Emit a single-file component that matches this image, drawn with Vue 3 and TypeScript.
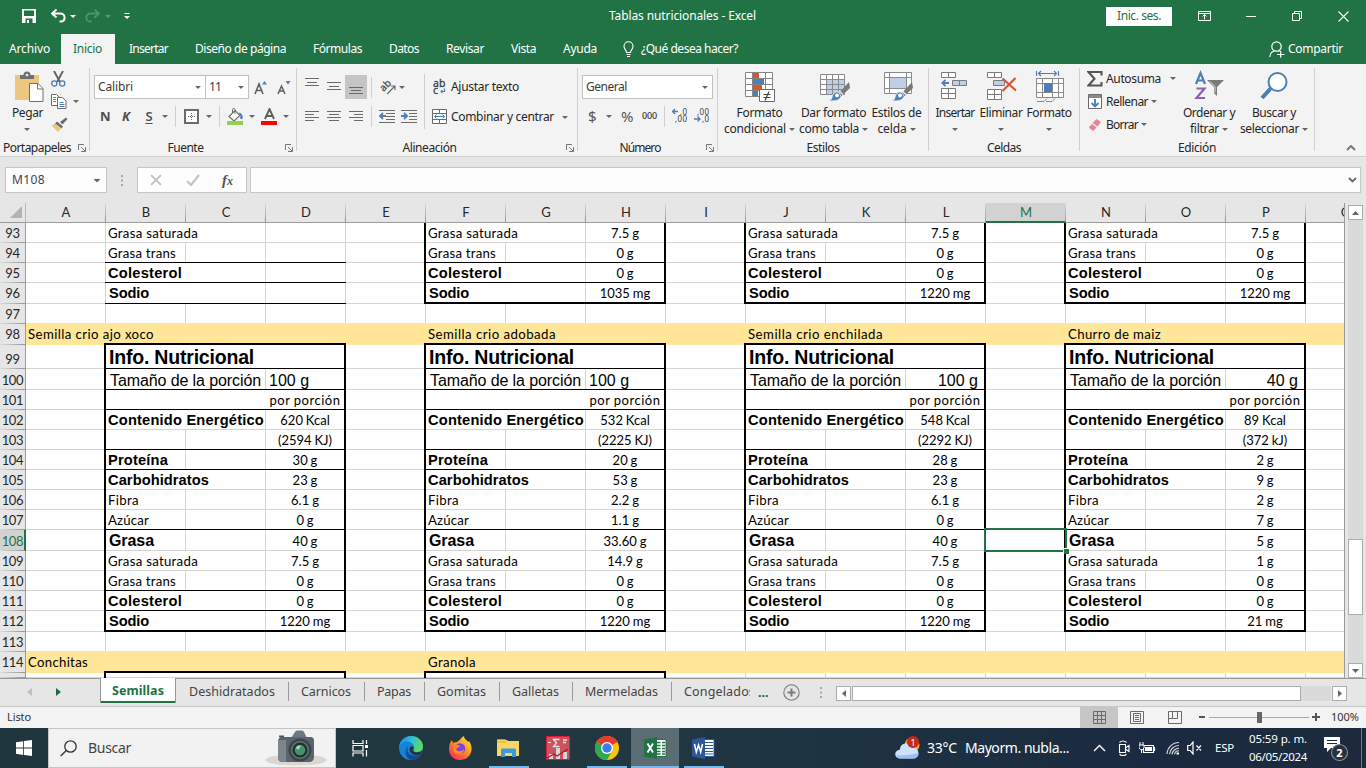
<script setup lang="ts">
import { h } from 'vue'

type Icon = [number, number, string]

const g = '#6b6b6b'
const b = '#4a7fb8'
const hl = (x: number, y: number, w: number, c = g) => `<rect x="${x}" y="${y}" width="${w}" height="1" fill="${c}"/>`
const rows = (list: number[][]) => list.map(([x, y, w]) => hl(x, y, w)).join('')

const brush = `<path d="M29 16 17.500 28.500l3 2.500L30 22z" fill="#7a7a7a"/><path d="M19 25l4 3.500" stroke="#f3f3f3" stroke-width="1.200"/><path d="M19 26.500c-4-1.500-6 .5-7.500 6.500-.8 1.500-3 1.500-4 1.500 5 1 12.500.5 13.500-4z" fill="${b}" stroke="#f3f3f3" stroke-width=".8"/><circle cx="17" cy="29.500" r="2" fill="#fff"/>`

const icons: Record<string, Icon> = {
  arrow: [6, 3, `<path d="M0 0h6L3 3z" fill="#666"/>`],
  arrowW: [6, 3, `<path d="M0 0h6L3 3z" fill="#fff"/>`],
  arrowP: [6, 3, `<path d="M0 0h6L3 3z" fill="#5c9a79"/>`],
  save: [14, 14, `<path d="M0 0h14v14H0z" fill="#fff"/><path d="M2 1.500h10V7H2zM3.500 9.500h7V14h-7z" fill="#217346"/><rect x="5" y="11" width="2" height="3" fill="#fff"/>`],
  undo: [15, 14, `<path d="M5.500.5 1 4.500 5.500 8.500M1.500 4.500H9c6 0 6 8 1 8H8.500" fill="none" stroke="#fff" stroke-width="2"/>`],
  redo: [15, 14, `<path d="M9.500.5 14 4.500 9.500 8.500M13.500 4.500H6c-6 0-6 8-1 8h1.500" fill="none" stroke="#4f9170" stroke-width="1.800"/>`],
  custom: [6, 6, `<path d="M.5 0h5v1h-5zM0 3h6L3 6z" fill="#fff"/>`],
  ribbonOpt: [13, 10, `<path d="M.5.5h12v9H.5zM.5 2.500h12M6.500 8.500v-5M4.500 5.500l2-2 2 2" fill="none" stroke="#fff"/>`],
  min: [10, 10, hl(0, 5, 10, '#fff')],
  restore: [10, 10, `<path d="M.5 2.500h7v7h-7zM2.500 2.500v-2h7v7h-2" fill="none" stroke="#fff"/>`],
  close: [11, 11, `<path d="M.5.5l10 10M10.500.5l-10 10" fill="none" stroke="#fff" stroke-width="1.100"/>`],
  bulb: [11, 16, `<path d="M3.500 11.500C3.500 9 1 8.500 1 5.300a4.500 4.500 0 0 1 9 0C10 8.500 7.500 9 7.500 11.500zM3.500 13.500h4M4 15.500h3" fill="none" stroke="#fff" stroke-width="1.100"/>`],
  share: [16, 17, `<circle cx="7.500" cy="5.500" r="4.700" fill="none" stroke="#fff" stroke-width="1.200"/><path d="M.7 16C1 12.500 3 10.500 5.500 10M9.500 9.800l1 .7M8 13.500h7.500M11.700 9.800v7" fill="none" stroke="#fff" stroke-width="1.200"/>`],
  paste: [30, 33, `<path d="M1 5h24v25H1z" fill="#edc77e"/><path d="M6 9V5h3.500a3.500 3.500 0 0 1 7 0H20v4z" fill="#6f6f6f"/><circle cx="13" cy="5" r="1.300" fill="#f3f3f3"/><path d="M15.500 13.500H24l5 5v13H15.500z" fill="#fff" stroke="#6f6f6f"/><path d="M23.500 13.500v5.500H29" fill="none" stroke="#6f6f6f"/>`],
  cut: [15, 16, `<path d="M3 0l6 11M12 0L6 11" stroke="#636363" stroke-width="1.900"/><circle cx="3.300" cy="12.500" r="2.600" fill="none" stroke="${b}" stroke-width="1.300"/><circle cx="11.200" cy="12.500" r="2.600" fill="none" stroke="${b}" stroke-width="1.300"/>`],
  copy: [16, 15, `<path d="M.5.5h5l3 3v8h-8z" fill="#fff" stroke="${g}"/><path d="M6.500 3.500h5l3.500 3.500v7.500H6.500z" fill="#fff" stroke="${g}"/><path d="M2 3.500h3M2 5.500h3M2 7.500h3M8.500 8.500h4M8.500 10.500h5M8.500 12.500h5" stroke="${b}"/>`],
  painter: [17, 15, `<path d="M15 .5l1.500 1.500-5 5.500L9 5z" fill="#6b6b6b"/><path d="M6 4.500l6 5-1.500 2-6.500-5z" fill="#6b6b6b"/><path d="M4 6.500l6 5-3 3.500L.5 8.500z" fill="#edc77e"/>`],
  launch: [8, 8, `<path d="M.5 6V.5H6M3 3l4 4M7.500 3v4.500H3" fill="none" stroke="#777"/>`],
  growA: [14, 15, `<path d="M8 4.500L10.500 1 13 4.500z" fill="${b}"/><path d="M1 14L5 4l4 10M2.500 10.500h5" fill="none" stroke="#5f5f5f" stroke-width="1.600"/>`],
  shrinkA: [14, 15, `<path d="M8.500 1L11 4.500 13.500 1z" fill="${b}"/><path d="M1 14l3.500-8L8 14M2.500 11h4" fill="none" stroke="#5f5f5f" stroke-width="1.500"/>`],
  borders: [15, 15, `<path d="M1 1h13v13H1z" fill="#fff" stroke="#6b6b6b" stroke-width="2"/><path d="M4 7.500h8M7.500 4v8" stroke="#6b6b6b" stroke-dasharray="1 1"/>`],
  bucket: [17, 17, `<path d="M2 8.500L8 2.500l5 5-6 5.500z" fill="#fff" stroke="#6b6b6b" stroke-width="1.100"/><path d="M5.500 5V1.500c0-1.500 2.500-1.500 2.500 0V6" fill="none" stroke="#6b6b6b"/><path d="M11.500 4.500c3 0 5 3 4 6.500-2 1-3-1-2-3.500z" fill="${b}"/><rect y="13" width="16" height="4" fill="#92d050"/>`],
  fontA: [17, 17, `<path d="M4 11L8.500 1l4.500 10M5.500 8h6" fill="none" stroke="#5f5f5f" stroke-width="1.900"/><rect y="13" width="16" height="4" fill="#f00"/>`],
  vTop: [15, 24, rows([[0, 3, 14], [2, 7, 10], [0, 10, 14]])],
  vMid: [15, 24, rows([[0, 7, 14], [2, 11, 10], [0, 14, 14]])],
  vBot: [15, 24, rows([[0, 12, 14], [2, 15, 10], [0, 18, 14]])],
  alL: [15, 12, rows([[0, 1, 14], [0, 4, 9], [0, 7, 14], [0, 10, 9]])],
  alC: [15, 12, rows([[0, 1, 14], [2, 4, 10], [0, 7, 14], [2, 10, 10]])],
  alR: [15, 12, rows([[0, 1, 14], [5, 4, 9], [0, 7, 14], [5, 10, 9]])],
  orient: [17, 18, `<text transform="translate(4.500 14) rotate(-45)" font-family="Noto Sans" font-size="10" fill="#505050" stroke="#505050" stroke-width=".3">ab</text><path d="M8 16L15.500 8.500M12 8h4v4" fill="none" stroke="#6b6b6b" stroke-width="1.200"/>`],
  outdent: [17, 13, rows([[0, 0, 16], [7, 3, 9], [7, 6, 9], [7, 9, 9], [0, 12, 16]]) + `<path d="M1 6h6M4 3L1 6l3 3" fill="none" stroke="${b}" stroke-width="1.800"/>`],
  indent: [17, 13, rows([[0, 0, 16], [8, 3, 8], [8, 6, 8], [8, 9, 8], [0, 12, 16]]) + `<path d="M0 6h6M3 3l3 3-3 3" fill="none" stroke="${b}" stroke-width="1.800"/>`],
  wrap: [14, 18, `<text x="0" y="9" font-family="Noto Sans" font-size="10.500" fill="#404040" stroke="#404040" stroke-width=".3">ab</text><text x="0" y="16" font-family="Noto Sans" font-size="10.500" fill="#404040" stroke="#404040" stroke-width=".3">c</text><path d="M11.500 10.500v3H8M9.500 11.800L8 13.500l1.500 1.700" fill="none" stroke="${b}" stroke-width="1.100"/>`],
  merge: [16, 16, `<path d="M.5.5h14v14H.5zM.5 4.500h14M.5 10.500h14M7.500.5v4M7.500 10.500v4" fill="#fff" stroke="${g}"/><path d="M2.500 7.500h10M4.500 5.500l-2 2 2 2M10.500 5.500l2 2-2 2" fill="none" stroke="${b}"/>`],
  decUp: [16, 16, `<path d="M0 3.500h6M3 1L.5 3.500 3 6" fill="none" stroke="${b}" stroke-width="1.300"/><text x="8" y="7" font-family="Noto Sans" font-size="8" textLength="7" fill="#404040">,0</text><text x="3" y="14" font-family="Noto Sans" font-size="8" textLength="12" fill="#404040">,00</text>`],
  decDn: [16, 16, `<path d="M0 11h6M3.500 8.500L6 11l-2.500 2.500" fill="none" stroke="${b}" stroke-width="1.300"/><text x="3" y="7" font-family="Noto Sans" font-size="8" textLength="12" fill="#404040">,00</text><text x="8" y="14" font-family="Noto Sans" font-size="8" textLength="7" fill="#404040">,0</text>`],
  cond: [30, 33, `<path d="M.5 2.500h27v24H.5z" fill="#fff"/><path d="M8 3h6v5H8zM8 14h9v6H8z" fill="#d65532"/><path d="M8 8h11v6H8zM8 20h5v6H8z" fill="${b}"/><path d="M.5 2.500h27v24H.5zM7.500 2.500v24M.5 8.500h27M.5 14.500h27M.5 20.500h27M20.500 2.500v24" fill="none" stroke="#858585"/><path d="M14.500 19.500h15v12h-15z" fill="#fff" stroke="#6b6b6b"/><path d="M18.500 24.500h7M18.500 27.500h7M24 21.500l-4 9" stroke="#444" stroke-width="1.200"/>`],
  tableFmt: [30, 33, `<path d="M.5 4.500h24v20H.5z" fill="#fff"/><path d="M7 9h18v16H7z" fill="#bfd0e6"/><path d="M.5 4.500h24v20H.5zM6.500 4.500v20M12.500 4.500v20M18.500 4.500v20M.5 9.500h24M.5 14.500h24M.5 19.500h24" fill="none" stroke="#8a8a8a"/><g transform="translate(0,-4)">${brush}</g>`],
  cellSty: [30, 33, `<path d="M1.500 2.500h27v21h-27z" fill="#fff"/><path d="M7 8h16v10H7z" fill="#bfd0e6"/><path d="M1.500 2.500h27v21h-27zM6.500 2.500v21M23.500 2.500v21M1.500 7.500h27M1.500 18.500h27" fill="none" stroke="#8a8a8a"/><g transform="translate(0,-4)">${brush}</g>`],
  insert: [28, 33, `<path d="M.5 2.500h14v5H.5zM7.500 2.500v5M.5 18.500h14v10H.5zM7.500 18.500v10M.5 23.500h14" fill="#fff" stroke="#7a7a7a"/><path d="M11.500 10.500h14v5h-14zM18.500 10.500v5" fill="#bfd0e6" stroke="#7a7a7a"/><path d="M1 13h7M4.500 9.800L1.300 13l3.200 3.200" fill="none" stroke="${b}" stroke-width="1.800"/>`],
  remove: [30, 33, `<path d="M.5 2.500h14v5H.5zM7.500 2.500v5M.5 19.500h14v10H.5zM7.500 19.500v10M.5 24.500h14" fill="#fff" stroke="#7a7a7a"/><path d="M6.500 10.500h11v5h-11z" fill="#bfd0e6" stroke="#7a7a7a"/><path d="M15.500 8.500l13.500 12M28.500 8L15.500 21" fill="none" stroke="#d65532" stroke-width="2.200"/>`],
  format: [30, 33, `<path d="M1.500 8.500h27v19h-27z" fill="#fff"/><path d="M1.500 8v19.500h27V8M1.500 8.500h27M7.500 8v19M17.500 8v19M23.500 8v19M1.500 13.500h27M1.500 22.500h27" fill="none" stroke="#8a8a8a"/><path d="M9 13h8v9H9z" fill="${b}"/><path d="M2 31.500h7l3-3M11 31.500h6l3-3" fill="none" stroke="#8a8a8a"/><path d="M1.500 1v5M23.500 1v5M4 3.500h17M6 1L3.500 3.500 6 6M19 1l2.500 2.500L19 6" fill="none" stroke="${b}" stroke-width="1.200"/>`],
  sum: [16, 16, `<path d="M14.500 4.500V1H1.500l6 6.800L1.500 14.500h13V11" fill="none" stroke="#555" stroke-width="2.100"/>`],
  fill: [15, 16, `<path d="M.5.5h13v14H.5z" fill="#fff" stroke="#6b6b6b"/><path d="M1 1h12v3H1z" fill="#8a8a8a"/><path d="M7 5v7M3.500 9L7 12.500 10.500 9" fill="none" stroke="${b}" stroke-width="1.900"/>`],
  eraser: [14, 14, `<path d="M8.500 1l4.500 3-3.500 4.500-5-3.500z" fill="#e7859a"/><path d="M4 6l4.500 3.300L6.500 12c-1 1-2 .6-2.800 0L1.800 10.500c-1-1-.6-1.600 0-2.200z" fill="#e7859a"/>`],
  sort: [31, 33, `<path d="M2 14L6.500 3 11 14M3.500 10.500h6" fill="none" stroke="${b}" stroke-width="2.200"/><path d="M2.500 18.500h8L2.500 28h8.500" fill="none" stroke="#9460b5" stroke-width="2.200"/><path d="M13 10h17l-7 7v9l-3-3v-6z" fill="#7a7a7a"/><path d="M16 11.500l5 5v6" stroke="#d8d8d8" fill="none"/>`],
  find: [28, 33, `<circle cx="17.500" cy="12" r="9" fill="#fff" stroke="${b}" stroke-width="2"/><path d="M11 18L2 28" stroke="${b}" stroke-width="4"/>`],
  collapse: [10, 6, `<path d="M1 5l4-4 4 4" fill="none" stroke="#777" stroke-width="1.900"/>`],
  cancel: [12, 12, `<path d="M1 1l10 10M11 1L1 11" stroke="#c4c4c4" stroke-width="1.800"/>`],
  check: [14, 12, `<path d="M1 7l4 4L13 1" fill="none" stroke="#c4c4c4" stroke-width="2.200"/>`],
  down: [9, 6, `<path d="M1 1l3.500 3.500L8 1" fill="none" stroke="#6b6b6b" stroke-width="1.900"/>`],
  dots3: [2, 11, `<path d="M0 0h2v2H0zM0 4.500h2v2H0zM0 9h2v2H0z" fill="#a8a8a8"/>`],
  corner: [12, 12, `<path d="M12 0v12H0z" fill="#b2b2b2"/>`],
  tabPrev: [5, 8, `<path d="M5 0v8L0 4z" fill="#c0c0c0"/>`],
  tabNext: [5, 8, `<path d="M0 0v8l5-4z" fill="#1e6b41"/>`],
  plus: [17, 17, `<circle cx="8.500" cy="8.500" r="7.700" fill="none" stroke="#7a7a7a" stroke-width="1.100"/><path d="M8.500 4.500v8M4.500 8.500h8" stroke="#7a7a7a" stroke-width="2"/>`],
  sLeft: [4, 7, `<path d="M4 0v7L0 3.500z" fill="#666"/>`],
  sRight: [4, 7, `<path d="M0 0v7l4-3.500z" fill="#666"/>`],
  sUp: [7, 4, `<path d="M0 4h7L3.500 0z" fill="#666"/>`],
  sDown: [7, 4, `<path d="M0 0h7L3.500 4z" fill="#666"/>`],
  vGrid: [13, 13, `<path d="M.5.5h12v12H.5zM4.500.5v12M8.500.5v12M.5 4.500h12M.5 8.500h12" fill="none" stroke="#6b6b6b"/>`],
  vPage: [14, 13, `<path d="M.5.5h13v12H.5zM3.500 2.500h7v8h-7zM5 4.500h4M5 6.500h4M5 8.500h4" fill="none" stroke="#6b6b6b"/>`],
  vBreak: [14, 13, `<path d="M.5.5h13v12H.5zM4.500.5v7h5v-7M.5 7.500h4" fill="none" stroke="#6b6b6b"/>`],
  win: [16, 16, `<path d="M0 2.300L7.200 1.200V7.600H0zM8 1.100L16 0v7.600H8zM0 8.400h7.200v6.500L0 13.800zM8 8.400h8V16L8 14.900z" fill="#fff"/>`],
  mag: [17, 17, `<circle cx="10.500" cy="6.500" r="5.700" fill="none" stroke="#333" stroke-width="1.300"/><path d="M6.300 10.500L.7 16" stroke="#333" stroke-width="1.400"/>`],
  camera: [62, 38, `<ellipse cx="31" cy="31" rx="31" ry="5.500" fill="#dcd5d0"/><path d="M26 9l4-6c.8-1.200 1.500-1.500 3-1.500h3c1.500 0 2.200.3 3 1.500l3 6z" fill="#6d7880"/><path d="M15 8h30c3 0 4 1 4 4v16c0 3-2 5-5 5H18c-3 0-5-2-5-5V11z" fill="#59646c"/><path d="M13 11h8v22h-4c-3 0-4-2-4-5z" fill="#7b868e"/><circle cx="35" cy="21" r="11.500" fill="#3c464d"/><circle cx="35" cy="21" r="9" fill="#66727a"/><circle cx="35" cy="21" r="7.500" fill="#22302d"/><circle cx="35" cy="21" r="5.300" fill="#3f9468"/><path d="M31 19c1-2 3-3 5-2l-3 4z" fill="#a5dcbd"/><path d="M14 6.500h5V8h-5z" fill="#4b555d"/>`],
  taskview: [17, 17, `<path d="M1 0v3.500h10V0M1 16.500V13h10v3.500M1 5.500h10v5.500H1zM14.500 0v4M14.500 10v6.500" fill="none" stroke="#fff" stroke-width="1.200"/><path d="M13 5h3v3h-3z" fill="#fff"/>`],
  edge: [24, 24, `<defs><linearGradient id="eg" x1="0" y1=".3" x2="1" y2=".6"><stop offset="0" stop-color="#1a8fdc"/><stop offset=".5" stop-color="#35c1cf"/><stop offset="1" stop-color="#63dd4c"/></linearGradient></defs><circle cx="12" cy="12" r="12" fill="#1583da"/><path d="M8.500 14.500c1 4.500 7 7 14 3.500-2 4-6 6-10.500 6C6.500 22 5 16 8.500 10z" fill="#0d4f96"/><path d="M0 12C.5 5 5.500 0 12 0c7 0 12 5 12 10.500 0 3.500-3 5.500-6 5.500-2.500 0-4-.8-4-1.800 0-.5 1-1.200 1-3.200 0-3-3-5.500-7-5.500C4 5.500 1 8 0 12z" fill="url(#eg)"/><path d="M14.300 14.700c.7 1.100 2 1.500 4 1.500 2.200 0 4.300-.7 5.300-2.200-.2 1.500-.8 3-1.800 4.300-3 1.700-7.300 1.200-9.600-1-1.700-1.600-2.300-4.600-1-6.300 1.500-1.500 3.800-.5 3.600 1.200-.1 1-.8 1.700-.5 2.500z" fill="#213842"/>`],
  firefox: [24, 24, `<defs><linearGradient id="ff" x1="1" y1="0" x2=".2" y2="1"><stop offset="0" stop-color="#fff04a"/><stop offset=".45" stop-color="#ff9a24"/><stop offset="1" stop-color="#fb2a5d"/></linearGradient></defs><path d="M12 24C5 24 1 19 1 13c0-4 1-7 3-9l1 3c1-1 3-1 4-1 1-1 2-1.500 3-2 0-1 2-3 4-4 0 3 3 4 4 6l1-1c2 3 3 6 2.500 9C23 20 18 24 12 24z" fill="url(#ff)"/><circle cx="12" cy="12.500" r="5.300" fill="#7b43d8"/><path d="M5 9c3-1 5 0 7 1-1 2-4 2-4 3 1 3 6 3 8 0 0 5-6 7-10 3-1-2-2-5-1-7z" fill="#ff8a1f"/>`],
  folder: [23, 20, `<path d="M0 1h8l2 2H0z" fill="#d18f16"/><path d="M0 2h10l1 1h11v15H0z" fill="#fcd462"/><path d="M0 4h9" stroke="#e5ab32"/><path d="M4 19v-7c0-1 .7-1.500 1.500-1.500h12c1 0 1.500.5 1.500 1.500v7h-4v-4h-7v4z" fill="#3b99dc"/>`],
  stat: [24, 24, `<path d="M.5.5h23v23H.5z" fill="#c9545f" stroke="#e0183c"/><path d="M3 18h4v5H3zM10 12h4v11h-4zM17 16h4v7h-4z" fill="#d9d4d6"/><path d="M13.500 3.500H7.500l3 3.500-3 3.500h6M17 4h4M17 6.500h3" fill="none" stroke="#f1dfe1" stroke-width="1.300"/><path d="M2 6.500h3" stroke="#f1dfe1"/><path d="M1 22l7-4 3 2 11-7" fill="none" stroke="#b4142e" stroke-width="1.200"/>`],
  chrome: [24, 24, `<circle cx="12" cy="12" r="12" fill="#f9c513"/><path d="M12 12L1.600 6A12 12 0 0 1 22.400 6z" fill="#e33b2e"/><path d="M12 12L1.600 6A12 12 0 0 0 12 24l5-9z" fill="#2da94f"/><path d="M12 6.500h10.700l-.3-.5H12z" fill="#e33b2e"/><circle cx="12" cy="12" r="6" fill="#fff"/><circle cx="12" cy="12" r="4.700" fill="#3b7ded"/>`],
  excel: [23, 22, `<path d="M11 2.500h11v17H11z" fill="#fff" stroke="#217346"/><path d="M13 5.500h3.500M18 5.500h3M13 8.500h3.500M18 8.500h3M13 11.500h3.500M18 11.500h3M13 14.500h3.500M18 14.500h3M13 17h3.500M18 17h3" stroke="#217346" stroke-width="1.400"/><path d="M0 2.500L13 0v22L0 19.500z" fill="#217346"/><path d="M3.500 6.500l5.500 9M9 6.500l-5.500 9" stroke="#fff" stroke-width="1.900"/>`],
  word: [23, 22, `<path d="M11 2.500h11v17H11z" fill="#fff" stroke="#2b579a"/><path d="M13 5.500h8M13 8.500h8M13 11.500h8M13 14.500h8M13 17h8" stroke="#2b579a" stroke-width="1.100"/><path d="M0 2.500L13 0v22L0 19.500z" fill="#2b579a"/><path d="M2.500 7l1.800 8L6.500 8l2.200 7 1.800-8" fill="none" stroke="#fff" stroke-width="1.500"/>`],
  weather: [25, 24, `<circle cx="17" cy="9" r="7.500" fill="#f0a422"/><path d="M6 22.500c-7.500 0-7.500-8-1-9 0-7.500 10-8 12-2 7-1 9 9 2 11z" fill="#cfe2fb"/><path d="M1.500 18c2 3 12 1 22-1 .5 3-2 5.500-4.500 5.500H6c-3 0-4.500-2-4.500-4.500z" fill="#9cc0f5"/><circle cx="18" cy="6" r="6" fill="#c42b1c"/><text x="18" y="9.500" font-family="Noto Sans" font-size="9" text-anchor="middle" fill="#fff">1</text>`],
  chev: [13, 8, `<path d="M1 7l5.500-5.500L12 7" fill="none" stroke="#fff" stroke-width="1.400"/>`],
  meet: [12, 16, `<path d="M1.500 4.500h6v8h-6zM8 7.500l3-2v6l-3-2M1.500 2.500c2-2 5-2 7 0M1.500 14.200c2 1.500 5 1.500 7 0" fill="none" stroke="#fff" stroke-width="1.100"/>`],
  battery: [17, 12, `<path d="M4.500 3.500h10v7h-10zM15.500 5v4" fill="none" stroke="#fff" stroke-width="1.200"/><path d="M6 5h7v4H6z" fill="#fff"/><path d="M0 3h5v3L3.500 7.500h-2L0 6zM1 0v3M4 0v3M2.500 7v4" stroke="#fff" fill="#1c2d40"/>`],
  wifi: [14, 14, `<path d="M1 13A12 12 0 0 1 13 1.500M3.500 13.200A9.500 9.500 0 0 1 13 4.500M6 13.300a7 7 0 0 1 7-6M8.500 13.400a4.500 4.500 0 0 1 4.500-3.700" fill="none" stroke="#d9dee3" stroke-width="1.100"/><path d="M10.500 11.500h2.500v2h-2.500z" fill="#fff"/>`],
  mute: [15, 14, `<path d="M.7 4.500h2.500L6 1v12L3.200 9.500H.7zM9.500 4.500l4.500 5M14 4.500l-4.500 5" fill="none" stroke="#fff" stroke-width="1.200"/>`],
  notif: [26, 26, `<path d="M1 2h16v11H8l-4 4v-4H1z" fill="#fff"/><path d="M4 5.500h10M4 8.500h10" stroke="#1b2a3e" stroke-width="1.200"/><circle cx="16.500" cy="17.500" r="8" fill="#2b2f36" stroke="#858c94" stroke-width="1.200"/><text x="16.500" y="21.500" font-family="Noto Sans" font-size="11" font-weight="bold" text-anchor="middle" fill="#fff">2</text>`],
}

const Ic = (p: { n: string }) => {
  const [w, ht, body] = icons[p.n]
  return h('svg', { width: w, height: ht, viewBox: `0 0 ${w} ${ht}`, innerHTML: body, class: 'ic' })
}
Ic.props = ['n']

/* Tracks a label's letters so that it spans exactly the given width. */
const vFit = {
  mounted(el: HTMLElement, { value }: { value: number }) {
    const r = document.createRange()
    r.selectNodeContents(el)
    const n = (el.textContent ?? '').length
    el.style.letterSpacing = `${(value - r.getBoundingClientRect().width) / n}px`
    el.style.width = `${value}px`
  },
}

const tabs: [string, number][] = [
  ['Archivo', 41], ['Inicio', 29], ['Insertar', 39], ['Diseño de página', 91], ['Fórmulas', 49],
  ['Datos', 30], ['Revisar', 38], ['Vista', 25], ['Ayuda', 34],
]
const sheets: [string, number][] = [
  ['Deshidratados', 86], ['Carnicos', 50], ['Papas', 34], ['Gomitas', 49], ['Galletas', 47], ['Mermeladas', 73],
]

const cols = 'ABCDEFGHIJKLMNOPQ'.split('')
const heights = [20, 20, 20, 21, 20, 21, 24, 21, 20, 20, 20, 20, 20, 20, 20, 21, 20, 20, 20, 21, 20, 21, 5]
const sheetRows = heights.map((_, i) => 93 + i)
const gridRows = heights.map((v) => `${v}px`).join(' ')
const banded = (r: number) => r === 98 || r === 114
const raised = (r: number) => [96, 98, 112, 114].includes(r)

/* first columns of the four product blocks */
const starts = [1, 5, 9, 13]
const openAll = [99, 101, 98, 114]
const openFirst = [93, 95, 96, 100, 102, 105, 109, 111, 112]
const noRight = (r: number, c: number) => {
  if (banded(r)) return true
  if (r === 97 || r === 113) return false
  const k = starts.findIndex((s) => c >= s && c < s + 3)
  if (k < 0 || r === 115) return r === 115 && (k === 0 || k === 1) && c < starts[k] + 2
  const off = c - starts[k]
  if (off === 0) return openAll.includes(r) || openFirst.includes(r)
  if (off === 1) return openAll.includes(r)
  return false
}
const cells = sheetRows.flatMap((r) => cols.map((_, c) => ({ r, c, off: noRight(r, c), fill: banded(r) })))

const at = (r: number, c: number, span = 1) => ({ gridRow: r - 92, gridColumn: `${c + 1} / span ${span}` })

interface Txt { r: number; c: number; s: number; t: string; k: string; w?: number }
const texts: Txt[] = []
const labels: [number, string, string, number][] = [
  [93, 'Grasa saturada', 'cal', 90], [94, 'Grasa trans', 'cal', 68], [95, 'Colesterol', 'arb', 74], [96, 'Sodio', 'arb s1', 40],
  [99, 'Info. Nutricional', 'info', 145], [100, 'Tamaño de la porción', 'ar', 151],
  [102, 'Contenido Energético', 'arb', 156], [104, 'Proteína', 'arb', 60], [105, 'Carbohidratos', 'arb', 101],
  [106, 'Fibra', 'cal', 31], [107, 'Azúcar', 'cal', 41], [108, 'Grasa', 'arg', 45],
  [109, 'Grasa saturada', 'cal', 90], [110, 'Grasa trans', 'cal', 68], [111, 'Colesterol', 'arb', 74], [112, 'Sodio', 'arb s1', 40],
]
const values: Record<number, string[]> = {
  93: ['', '7.5 g', '7.5 g', '7.5 g'], 94: ['', '0 g', '0 g', '0 g'], 95: ['', '0 g', '0 g', '0 g'],
  96: ['', '1035 mg', '1220 mg', '1220 mg'],
  102: ['620 Kcal', '532 Kcal', '548 Kcal', '89 Kcal'],
  103: ['(2594 KJ)', '(2225 KJ)', '(2292 KJ)', '(372 kJ)'],
  104: ['30 g', '20 g', '28 g', '2 g'], 105: ['23 g', '53 g', '23 g', '9 g'],
  106: ['6.1 g', '2.2 g', '6.1 g', '2 g'], 107: ['0 g', '1.1 g', '0 g', '7 g'],
  108: ['40 g', '33.60 g', '40 g', '5 g'], 109: ['7.5 g', '14.9 g', '7.5 g', '1 g'],
  110: ['0 g', '0 g', '0 g', '0 g'], 111: ['0 g', '0 g', '0 g', '0 g'],
  112: ['1220 mg', '1220 mg', '1220 mg', '21 mg'],
}
starts.forEach((c, i) => {
  labels.forEach(([r, t, k, w]) => texts.push({ r, c, s: 2, t, k, w }))
  Object.entries(values).forEach(([r, v]) => v[i] && texts.push({ r: +r, c: c + 2, s: 1, t: v[i], k: 'cal mid' }))
  texts.push({ r: 101, c: c + 2, s: 1, t: 'por porción', k: 'cal mid', w: 71 })
  texts.push({ r: 100, c: c + 2, s: 1, t: i === 3 ? '40 g' : '100 g', k: i < 2 ? 'ar lead' : 'ar end' })
})
texts.push(
  { r: 98, c: 0, s: 3, t: 'Semilla crio ajo xoco', k: 'cal', w: 126 },
  { r: 98, c: 5, s: 3, t: 'Semilla crio adobada', k: 'cal', w: 128 },
  { r: 98, c: 9, s: 3, t: 'Semilla crio enchilada', k: 'cal', w: 135 },
  { r: 98, c: 13, s: 3, t: 'Churro de maiz', k: 'cal', w: 93 },
  { r: 114, c: 0, s: 2, t: 'Conchitas', k: 'cal', w: 60 },
  { r: 114, c: 5, s: 2, t: 'Granola', k: 'cal', w: 48 },
)

const rules = starts.flatMap((c, i) =>
  [94, 95, ...(i ? [] : [96]), 99, 100, 101, 103, 104, 107, 110, 111].map((r) => ({ r, c })),
)
</script>

<template>
  <div class="screen">
    <header class="title">
      <Ic n="save" class="m22" /><Ic n="undo" class="m15" /><Ic n="arrowW" class="m4" />
      <Ic n="redo" class="m9" /><Ic n="arrowP" class="m5" /><Ic n="custom" class="m13" />
      <span class="doc" v-fit="147">Tablas nutricionales  -  Excel</span>
      <span class="login"><span v-fit="44">Inic. ses.</span></span>
      <Ic n="ribbonOpt" class="m26" /><Ic n="min" class="m35" /><Ic n="restore" class="m36" /><Ic n="close" class="m36" />
    </header>

    <nav class="tabs">
      <span v-for="([t, w], i) in tabs" :key="t" class="tab" :class="{ first: i === 0, on: i === 1 }"><span v-fit="w">{{ t }}</span></span>
      <Ic n="bulb" class="m13" /><span class="m7" v-fit="97">¿Qué desea hacer?</span>
      <span class="share"><Ic n="share" /><span v-fit="55">Compartir</span></span>
    </nav>

    <section class="ribbon">
      <div class="group g1">
        <div class="body cols">
          <div class="big m11"><Ic n="paste" class="pst" /><span v-fit="31">Pegar</span><i class="ar"><Ic n="arrow" class="pa" /></i></div>
          <div class="stack">
            <div class="srow"><Ic n="cut" /></div>
            <div class="srow"><Ic n="copy" /><Ic n="arrow" class="m6" /></div>
            <div class="srow"><Ic n="painter" /></div>
          </div>
        </div>
        <div class="foot"><span><b v-fit="68">Portapapeles</b></span><Ic n="launch" /></div>
      </div>
      <div class="sep"></div>

      <div class="group g2">
        <div class="body">
          <div class="line top">
            <div class="combo font"><span v-fit="35">Calibri</span><Ic n="arrow" /></div>
            <div class="combo size"><span v-fit="12">11</span><Ic n="arrow" /></div>
            <Ic n="growA" class="m5" /><Ic n="shrinkA" class="m9" />
          </div>
          <div class="line">
            <span class="fmt bold m10">N</span><span class="fmt ital">K</span><span class="fmt und">S</span><Ic n="arrow" class="m8" />
            <i class="tick m7"></i><Ic n="borders" class="m8" /><Ic n="arrow" class="m7" />
            <i class="tick m7"></i><Ic n="bucket" class="m7" /><Ic n="arrow" class="m5" />
            <Ic n="fontA" class="m6" /><Ic n="arrow" class="m5" />
          </div>
        </div>
        <div class="foot"><span><b v-fit="36">Fuente</b></span><Ic n="launch" /></div>
      </div>
      <div class="sep"></div>

      <div class="group g3">
        <div class="body cols">
          <div class="half">
            <div class="line top">
              <Ic n="vTop" class="m8" /><Ic n="vMid" class="m7" /><span class="pressed"><Ic n="vBot" /></span>
              <i class="tick m4"></i><Ic n="orient" class="m7" /><Ic n="arrow" class="m3" />
            </div>
            <div class="line">
              <Ic n="alL" class="m8" /><Ic n="alC" class="m7" /><Ic n="alR" class="m7" />
              <i class="tick m7"></i><Ic n="outdent" class="m7" /><Ic n="indent" class="m5" />
            </div>
          </div>
          <i class="tall"></i>
          <div>
            <div class="line top"><Ic n="wrap" class="m8" /><span class="m4" v-fit="68">Ajustar texto</span></div>
            <div class="line low"><Ic n="merge" class="m7" /><span class="m3" v-fit="103">Combinar y centrar</span><Ic n="arrow" class="m8" /></div>
          </div>
        </div>
        <div class="foot"><span><b v-fit="54">Alineación</b></span><Ic n="launch" /></div>
      </div>
      <div class="sep"></div>

      <div class="group g4">
        <div class="body">
          <div class="line top"><div class="combo num"><span v-fit="41">General</span><Ic n="arrow" /></div></div>
          <div class="line">
            <span class="cur">$</span><Ic n="arrow" class="m8" /><span class="pct" v-fit="14">%</span><span class="mil" v-fit="15">000</span>
            <i class="tick m7"></i><Ic n="decUp" class="m7" /><Ic n="decDn" class="m6" />
          </div>
        </div>
        <div class="foot"><span><b v-fit="41">Número</b></span><Ic n="launch" /></div>
      </div>
      <div class="sep"></div>

      <div class="group g5">
        <div class="body cols">
          <div class="big w78"><Ic n="cond" /><span v-fit="46">Formato</span><i class="ar"><span v-fit="62">condicional</span><Ic n="arrow" /></i></div>
          <div class="big w74"><Ic n="tableFmt" class="m3" /><span v-fit="65">Dar formato</span><i class="ar"><span v-fit="60">como tabla</span><Ic n="arrow" /></i></div>
          <div class="big w54"><Ic n="cellSty" class="m3" /><span v-fit="50">Estilos de</span><i class="ar"><span v-fit="29">celda</span><Ic n="arrow" /></i></div>
        </div>
        <div class="foot"><span><b v-fit="33">Estilos</b></span></div>
      </div>
      <div class="sep"></div>

      <div class="group g6">
        <div class="body cols">
          <div class="big w46 m3"><Ic n="insert" /><span v-fit="39">Insertar</span><i class="ar"><Ic n="arrow" /></i></div>
          <div class="big w46"><Ic n="remove" class="m1" /><span v-fit="43">Eliminar</span><i class="ar"><Ic n="arrow" /></i></div>
          <div class="big w50"><Ic n="format" class="m1" /><span v-fit="45">Formato</span><i class="ar"><Ic n="arrow" /></i></div>
        </div>
        <div class="foot"><span><b v-fit="34">Celdas</b></span></div>
      </div>
      <div class="sep"></div>

      <div class="group g7">
        <div class="body cols">
          <div class="stack edit">
            <div class="srow"><Ic n="sum" /><span class="m3" v-fit="55">Autosuma</span><Ic n="arrow" class="m9" /></div>
            <div class="srow"><Ic n="fill" class="m1" /><span class="m3" v-fit="42">Rellenar</span><Ic n="arrow" class="m3" /></div>
            <div class="srow"><Ic n="eraser" class="m1" /><span class="m4" v-fit="32">Borrar</span><Ic n="arrow" class="m3" /></div>
          </div>
          <div class="big w60"><Ic n="sort" /><span v-fit="52">Ordenar y</span><i class="ar"><span v-fit="29">filtrar</span><Ic n="arrow" /></i></div>
          <div class="big w70"><Ic n="find" /><span v-fit="44">Buscar y</span><i class="ar"><span v-fit="59">seleccionar</span><Ic n="arrow" /></i></div>
        </div>
        <div class="foot"><span><b v-fit="38">Edición</b></span></div>
      </div>
      <div class="sep"></div>
      <Ic n="collapse" class="fold" />
    </section>

    <section class="fbar">
      <div class="box name"><span v-fit="33">M108</span><Ic n="arrow" class="wide" /></div>
      <Ic n="dots3" class="m14" />
      <div class="box fx"><Ic n="cancel" /><Ic n="check" class="m24" /><em>f<small>x</small></em></div>
      <div class="box formula"><Ic n="down" /></div>
    </section>

    <div class="work">
      <div class="sheet">
        <div class="corner"><Ic n="corner" /></div>
        <div class="colheads"><span v-for="c in cols" :key="c" :class="{ sel: c === 'M' }">{{ c }}</span></div>
        <div class="rowheads" :style="{ gridTemplateRows: gridRows }">
          <span v-for="r in sheetRows" :key="r" :class="{ sel: r === 108, up: raised(r) }">{{ r < 115 ? r : '' }}</span>
        </div>
        <div class="cells" :style="{ gridTemplateRows: gridRows }">
          <div v-for="x in cells" :key="x.r + '-' + x.c" class="cell" :class="{ off: x.off, fill: x.fill }" :style="at(x.r, x.c)"></div>
          <div v-for="(x, i) in rules" :key="'r' + i" class="rule" :style="at(x.r, x.c, 3)"></div>
          <div v-for="c in starts.slice(1)" :key="'t' + c" class="frame cut" :style="{ gridRow: '1 / 5', gridColumn: `${c + 1} / span 3` }"></div>
          <div v-for="c in starts" :key="'f' + c" class="frame" :style="{ gridRow: '7 / 21', gridColumn: `${c + 1} / span 3` }"></div>
          <div v-for="c in starts.slice(0, 2)" :key="'b' + c" class="frame low" :style="{ gridRow: '23 / 24', gridColumn: `${c + 1} / span 3` }"></div>
          <template v-for="(x, i) in texts" :key="'x' + i">
            <div v-if="x.w" class="txt" :class="[x.k, { up: raised(x.r) }]" :style="at(x.r, x.c, x.s)"><span v-fit="x.w">{{ x.t }}</span></div>
            <div v-else class="txt" :class="[x.k, { up: raised(x.r) }]" :style="at(x.r, x.c, x.s)">{{ x.t }}</div>
          </template>
          <div class="cursor" :style="at(108, 12)"><i></i></div>
        </div>
      </div>
      <div class="vscroll">
        <span class="btn"><Ic n="sUp" /></span>
        <div class="track"><div class="thumb"></div></div>
        <span class="btn"><Ic n="sDown" /></span>
      </div>
    </div>

    <div class="sheettabs">
      <Ic n="tabPrev" class="m27" /><Ic n="tabNext" class="m24" />
      <span class="active"><span v-fit="52">Semillas</span></span>
      <span v-for="[t, w] in sheets" :key="t" class="st"><span v-fit="w">{{ t }}</span></span>
      <span class="clip"><span v-fit="71">Congelados</span></span>
      <span class="more">...</span>
      <Ic n="plus" class="m13" /><Ic n="dots3" class="m20" />
      <span class="btn hb"><Ic n="sLeft" /></span>
      <div class="htrack"><div class="hthumb"></div></div>
      <span class="btn hr"><Ic n="sRight" /></span>
    </div>

    <footer class="status">
      <span class="ready" v-fit="24">Listo</span>
      <span class="view"><Ic n="vGrid" /></span><Ic n="vPage" class="m12" /><Ic n="vBreak" class="m24" />
      <i class="minus"></i><div class="zoom"><i></i></div><i class="plus"></i><span class="pc" v-fit="28">100%</span>
    </footer>

    <div class="taskbar">
      <Ic n="win" class="m16" />
      <div class="search"><Ic n="mag" /><span v-fit="43">Buscar</span><Ic n="camera" class="cam" /></div>
      <Ic n="taskview" class="m16" />
      <div class="app a1"><Ic n="edge" /></div>
      <div class="app"><Ic n="firefox" /></div>
      <div class="app run"><Ic n="folder" /></div>
      <div class="app"><Ic n="stat" /></div>
      <div class="app run"><Ic n="chrome" /></div>
      <div class="app run cur"><Ic n="excel" /></div>
      <div class="app run"><Ic n="word" /></div>
      <div class="weather"><Ic n="weather" /><span class="m7" v-fit="30">33°C</span><span class="m8" v-fit="104">Mayorm. nubla...</span></div>
      <Ic n="chev" class="m24" /><Ic n="meet" class="m12" /><Ic n="battery" class="m9" /><Ic n="wifi" class="m10" /><Ic n="mute" class="m7" />
      <span class="esp" v-fit="19">ESP</span>
      <div class="clock"><span v-fit="58">05:59 p. m.</span><span v-fit="58">06/05/2024</span></div>
      <Ic n="notif" class="m16" /><i class="peek"></i>
    </div>
  </div>
</template>

<style>
html, body { margin: 0; padding: 0; overflow: hidden; }
</style>

<style scoped>
.screen { width: 1366px; height: 768px; display: flex; flex-direction: column; overflow: hidden; background: #e6e6e6; font-family: "Noto Sans", "Open Sans", sans-serif; font-size: 12px; line-height: 16px; color: #262626; white-space: pre; }
.screen * { box-sizing: border-box; }
.ic { display: block; flex: none; }
span, b, i { flex: none; font-weight: inherit; font-style: inherit; }
[style*="letter-spacing"] { display: inline-block; }
.m1 { margin-left: 1px; } .m3 { margin-left: 3px; } .m4 { margin-left: 4px; } .m5 { margin-left: 5px; }
.m6 { margin-left: 6px; } .m7 { margin-left: 7px; } .m8 { margin-left: 8px; } .m9 { margin-left: 9px; }
.m10 { margin-left: 10px; } .m11 { margin-left: 11px; } .m12 { margin-left: 12px; } .m13 { margin-left: 13px; }
.m14 { margin-left: 14px; } .m15 { margin-left: 15px; } .m16 { margin-left: 16px; } .m20 { margin-left: 20px; }
.m22 { margin-left: 22px; } .m24 { margin-left: 24px; } .m26 { margin-left: 26px; } .m27 { margin-left: 27px; }
.m35 { margin-left: 35px; } .m36 { margin-left: 36px; }

.title { height: 34px; flex: none; background: #217346; color: #fff; display: flex; align-items: center; padding-bottom: 2px; }
.doc { margin-left: 479px; }
.login { margin-left: auto; width: 66px; height: 19px; background: #fff; color: #217346; display: flex; align-items: center; justify-content: center; }
.title > .ic:last-child { margin-right: 17px; }

.tabs { height: 30px; flex: none; background: #217346; color: #fff; display: flex; align-items: center; }
.tab { height: 30px; padding: 0 13px 0 14px; display: flex; align-items: center; }
.tab.first { padding: 0 11px 0 9px; }
.tab.on { background: #f3f3f3; color: #217346; padding: 0 13px 0 12px; }
.share { margin-left: auto; margin-right: 23px; display: flex; align-items: center; gap: 3px; }

.ribbon { height: 93px; flex: none; background: #f3f3f3; border-bottom: 1px solid #d2d0ce; display: flex; }
.group { display: flex; flex-direction: column; flex: none; }
.sep { width: 1px; flex: none; margin: 4px 0 5px; background: #d0d0d0; }
.g1 { width: 89px; } .g2 { width: 206px; } .g3 { width: 280px; } .g4 { width: 139px; }
.g5 { width: 210px; } .g6 { width: 150px; } .g7 { width: 234px; }
.body { height: 76px; }
.cols { display: flex; }
.foot { height: 16px; display: flex; align-items: center; }
.foot > span { flex: 1; text-align: center; display: flex; justify-content: center; }
.foot .ic { margin: 0 3px 0 4px; }
.big { display: flex; flex-direction: column; align-items: center; padding-top: 6px; flex: none; }
.big > .ic { margin-bottom: 2px; }
.big > span, .big .ar { height: 16px; }
.big .ar { display: flex; align-items: center; gap: 3px; }
.pst { margin-left: 3px; }
.pa { margin-right: 2px; }
.w78 { width: 79px; margin-left: 2px; } .w74 { width: 69px; } .w54 { width: 57px; } .w46 { width: 46px; } .w50 { width: 50px; }
.w60 { width: 56px; } .w70 { width: 68px; margin-left: 3px; }
.stack { padding-top: 3px; margin-left: 7px; }
.srow { height: 23px; display: flex; align-items: center; }
.stack.edit { margin-left: 7px; width: 94px; }
.line { height: 22px; display: flex; align-items: center; }
.line.top { height: 24px; margin: 11px 0 6px; }
.line.low { height: 24px; }
.combo { height: 24px; background: #fff; border: 1px solid #c0c0c0; display: flex; align-items: center; justify-content: space-between; padding: 0 4px 0 3px; color: #3b3b3b; }
.combo.font { width: 112px; margin-left: 4px; }
.combo.size { width: 43px; border-left: 0; }
.combo.num { width: 131px; margin-left: 4px; }
.fmt { width: 10px; font-size: 13px; color: #505050; font-weight: 700; text-align: center; }
.ital { font-style: italic; margin-left: 11px; }
.und { text-decoration: underline; text-underline-offset: 2px; margin-left: 13px; font-weight: 600; }
.tick { width: 1px; height: 21px; background: #d0d0d0; }
.tall { width: 1px; height: 55px; margin-top: 10px; background: #d0d0d0; }
.half { width: 127px; }
.pressed { width: 22px; height: 24px; margin-left: 3px; padding-left: 4px; background: #c5c5c5; }
span.cur { margin-left: 10px; font-size: 15px; width: 10px; color: #555; }
.pct { font-size: 15px; margin-left: 9px; color: #555; }
.mil { font-size: 9px; margin-left: 7px; color: #333; font-weight: 500; }
.fold { margin: 81px 0 0 31px; }

.fbar { height: 46px; flex: none; display: flex; align-items: center; padding: 0 5px; }
.box { height: 26px; background: #fdfdfd; border: 1px solid #c6c6c6; display: flex; align-items: center; }
.name { width: 102px; padding: 0 6px; justify-content: space-between; color: #444; }
.wide { transform: scale(1.25); }
.fx { width: 110px; margin-left: 14px; padding-left: 12px; }
.fx em { font: italic 600 15px "Liberation Serif", serif; color: #555; margin-left: 22px; }
.fx small { font-size: 12px; }
.formula { width: 1111px; margin-left: 3px; justify-content: flex-end; padding-right: 3px; }

.work { height: 475px; flex: none; display: flex; }
.sheet { width: 1345px; flex: none; height: 475px; display: grid; grid-template-columns: 26px 1360px; grid-template-rows: 20px 455px; overflow: hidden; border-right: 1px solid #999; font-family: Lato, sans-serif; font-size: 13px; }
.corner { border-right: 1px solid #b8b8b8; border-bottom: 1px solid #9b9b9b; display: flex; align-items: flex-end; justify-content: flex-end; padding: 0 3px 4px 0; }
.colheads { display: grid; grid-template-columns: repeat(17, 80px); border-bottom: 1px solid #9b9b9b; }
.colheads span { text-align: center; line-height: 19px; padding-left: 1px; border-right: 1px solid; border-image: linear-gradient(#e0e0e0, #909090) 1; }
.colheads .sel { background: #d2d2d2; color: #217346; box-shadow: inset 0 -1px #217346, 0 1px #217346; }
.rowheads { display: grid; border-right: 1px solid #9b9b9b; }
.rowheads span { display: flex; align-items: flex-end; justify-content: center; line-height: 18px; border-bottom: 1px solid; border-image: linear-gradient(90deg, #e0e0e0, #909090) 1; letter-spacing: -.3px; }
.rowheads .up { padding-bottom: 1px; }
.rowheads .sel { background: #d2d2d2; color: #217346; box-shadow: inset -1px 0 #217346, 1px 0 #217346; }
.cells { display: grid; grid-template-columns: repeat(17, 80px); background: #fff; overflow: hidden; color: #000; }
.cell { border-right: 1px solid #d4d4d4; border-bottom: 1px solid #d4d4d4; }
.cell.off { border-right: 0; }
.cell.fill { background: #ffe699; border-color: #ffe699; margin-top: -1px; }
.rule { align-self: end; height: 1px; background: #000; margin-left: -1px; }
.frame { border: 2px solid #000; margin: -2px 0 0 -2px; }
.frame.cut { border-top: 0; margin-top: 0; }
.frame.low { border-bottom: 0; }
.txt { display: flex; align-items: flex-end; padding: 0 1px 0 2px; line-height: 20px; z-index: 1; overflow: visible; }
.txt.up { padding-bottom: 1px; }
.cal { font-size: 13.2px; }
.mid { font-size: 13px; justify-content: center; padding-left: 0; padding-right: 2px; word-spacing: -.4px; }
.arb, .ar, .arg, .info { font-family: "Liberation Sans", Arial, sans-serif; color: #000; }
.big .ar { font-family: inherit; color: inherit; }
.arb { font-size: 14.67px; font-weight: 700; }
.s1 { padding-left: 3px; }
.txt.ar { font-size: 16px; padding-left: 4px; line-height: 19px; }
.txt.lead { padding-left: 3px; }
.txt.end { justify-content: flex-end; padding-right: 8px; }
.arg { font-size: 16px; font-weight: 700; padding-left: 3px; line-height: 20px; }
.info { font-size: 19.5px; font-weight: 700; padding-left: 3px; line-height: 24px; }
.cursor { border: 2px solid #217346; margin: -2px -1px -1px -2px; position: relative; z-index: 2; }
.cursor i { position: absolute; right: -4px; bottom: -4px; width: 6px; height: 6px; background: #217346; border: 1px solid #fff; border-width: 1px 0 0 1px; }

.vscroll { width: 15px; margin: 2px 0 0 3px; display: flex; flex-direction: column; }
.btn { width: 15px; height: 15px; background: #fff; border: 1px solid #ababab; display: flex; align-items: center; justify-content: center; }
.track { flex: 1; background: #dadada; padding-top: 319px; }
.thumb { height: 76px; background: #fff; border: 1px solid #ababab; }

.sheettabs { height: 29px; flex: none; border-top: 1px solid #999; border-bottom: 1px solid #c6c6c6; display: flex; align-items: center; font-size: 12.500px; color: #444; }
.sheettabs > .ic { margin-top: -1px; }
.active { align-self: flex-start; height: 25px; width: 76px; margin: -1px 0 0 39px; padding: 5px 0 0 11px; background: #fff; border: solid #999; border-width: 0 1px; box-shadow: inset 0 -2px #217346; color: #217346; font-weight: 700; }
.st { height: 19px; margin-top: -2px; padding: 0 13px 0 12px; border-right: 1px solid #999; display: flex; align-items: center; }
.st:nth-of-type(2) { padding-left: 13px; }
.clip { width: 66px; margin: -2px 0 0 12px; overflow: hidden; }
.more { width: 12px; margin-left: 8px; color: #0e6a37; font-weight: 700; }
.hb { margin-left: 14px; }
.htrack { width: 479px; height: 15px; margin-left: 1px; background: #dadada; }
.hthumb { width: 449px; height: 15px; background: #fff; border: 1px solid #ababab; }
.hr { margin-left: 1px; }
.sheettabs .btn, .htrack { margin-top: 1px; }

.status { height: 21px; flex: none; background: #f3f3f3; display: flex; align-items: center; font-size: 11px; color: #333; padding-bottom: 1px; }
.ready { margin-left: 7px; }
.view { margin-left: auto; width: 38px; height: 21px; margin-bottom: -1px; background: #c6c6c6; display: flex; align-items: center; justify-content: center; }
.minus { width: 6px; height: 2px; margin-left: 17px; background: #555; }
.zoom { width: 100px; height: 11px; margin-left: 4px; background: linear-gradient(#a8a8a8, #a8a8a8) 0 5px / 100% 1px no-repeat; }
.zoom i { display: block; width: 5px; height: 11px; margin-left: 48px; background: #666; }
.plus { width: 8px; height: 8px; margin-left: 3px; background: linear-gradient(#555, #555) 3px 0 / 2px 8px no-repeat, linear-gradient(#555, #555) 0 3px / 8px 2px no-repeat; }
.pc { margin: 0 7px 0 11px; }

.taskbar { height: 40px; flex: none; background: linear-gradient(90deg, #20363f, #223841 45%, #1e3342 60%, #1b2a40 85%, #1c2a3c); display: flex; align-items: center; color: #fff; }
.search { width: 288px; height: 40px; margin-left: 16px; background: #f2f2f2; border: 1px solid #c5c5c5; color: #444; display: flex; align-items: center; padding-left: 11px; font-size: 14px; }
.search > span { margin-left: 11px; }
.cam { margin-left: 134px; }
.app { width: 49px; height: 40px; display: flex; align-items: center; justify-content: center; }
.app.a1 { margin-left: 17px; }
.run { background: linear-gradient(#76b9ed, #76b9ed) center bottom / 40px 2px no-repeat; }
.app.cur { width: 48px; margin: 0; background: linear-gradient(#76b9ed, #76b9ed) center bottom / 48px 2px no-repeat, #5c6c74; }
.weather { margin-left: auto; display: flex; align-items: center; font-size: 14px; }
.esp { margin-left: 13px; font-size: 11.500px; }
.clock { margin-left: 15px; display: flex; flex-direction: column; line-height: 18px; padding-bottom: 1px; font-size: 11.500px; }
.peek { width: 1px; height: 40px; margin: 0 4px 0 12px; background: #6b7784; }
</style>
